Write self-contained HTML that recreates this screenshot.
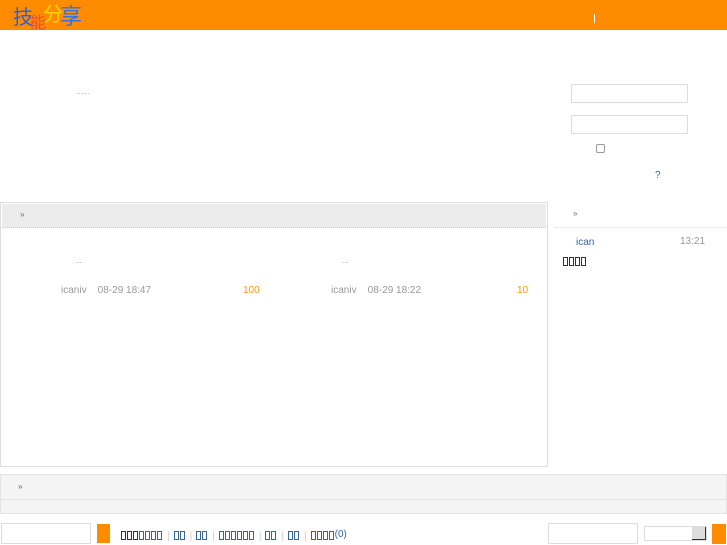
<!DOCTYPE html>
<html><head><meta charset="utf-8"><style>
*{margin:0;padding:0;box-sizing:border-box}
body{width:727px;height:545px;position:relative;background:#fff;font-family:"Liberation Sans","Noto Sans CJK SC",sans-serif;font-size:10px;overflow:hidden}
.a{position:absolute}
.g{color:#999}
.b{color:#369}
.o{color:#f90}
.inp{position:absolute;border:1px solid #ddd;background:#fff}
.tofu{display:inline-block;width:5px;height:9px;border:1px solid #333;margin-right:1px;vertical-align:-1px}
.tb{display:inline-block;width:5px;height:9px;border:1px solid #369;margin-right:1px;vertical-align:-1px}
.sep{color:#ccc;margin:0 4px}
</style></head><body>
<div class="a" style="left:0;top:0;width:727px;height:30px;background:#ff8c00"></div>
<div class="a" style="left:13px;top:1px;font-size:20px;line-height:28px;letter-spacing:-3px;white-space:nowrap"><span style="color:#2a5fd6">技</span><span style="color:#e84d2a;font-size:16px;vertical-align:-4px">能</span><span style="color:#ffd400;vertical-align:3px">分</span><span style="color:#3a6fe0;font-size:22px">享</span></div>
<div class="a" style="left:594px;top:14px;width:1px;height:9px;background:#fff"></div>
<div class="a g" style="left:76px;top:87px;font-size:8px">......</div>
<div class="inp" style="left:571px;top:84px;width:117px;height:19px"></div>
<div class="inp" style="left:571px;top:115px;width:117px;height:19px"></div>
<div class="a" style="left:596px;top:144px;width:9px;height:9px;border:1px solid #999;border-radius:2px"></div>
<div class="a b" style="left:655px;top:170px">?</div>

<div class="a" style="left:0;top:202px;width:548px;height:265px;border:1px solid #ddd"></div>
<div class="a" style="left:2px;top:204px;width:544px;height:24px;background:#ececec;border-bottom:1px dotted #ccc"></div>
<div class="a" style="left:20px;top:210px;color:#666;font-size:8px">»</div>
<div class="a g" style="left:75px;top:256px;font-size:8px">...</div>
<div class="a g" style="left:342px;top:256px;font-size:8px">...</div>
<div class="a g" style="left:61px;top:285px">icaniv&nbsp;&nbsp;&nbsp; 08-29 18:47</div>
<div class="a o" style="left:243px;top:285px">100</div>
<div class="a g" style="left:331px;top:285px">icaniv&nbsp;&nbsp;&nbsp; 08-29 18:22</div>
<div class="a o" style="left:517px;top:285px">10</div>

<div class="a" style="left:573px;top:209px;color:#666;font-size:8px">»</div>
<div class="a" style="left:555px;top:227px;width:170px;border-top:1px dotted #ddd"></div>
<div class="a b" style="left:576px;top:237px">ican</div>
<div class="a g" style="left:680px;top:236px">13:21</div>
<div class="a" style="left:563px;top:257px"><span class="tofu"></span><span class="tofu"></span><span class="tofu"></span><span class="tofu"></span></div>

<div class="a" style="left:0;top:474px;width:727px;height:40px;background:#f4f4f4;border:1px solid #e4e4e4"></div>
<div class="a" style="left:0;top:499px;width:727px;border-top:1px solid #e4e4e4"></div>
<div class="a" style="left:18px;top:482px;color:#666;font-size:8px">»</div>

<div class="inp" style="left:1px;top:523px;width:90px;height:21px"></div>
<div class="a" style="left:97px;top:524px;width:13px;height:19px;background:#ff8c00"></div>
<div class="a" style="left:121px;top:529px;white-space:nowrap"><span class="tofu"></span><span class="tofu"></span><span class="tofu"></span><span class="tb"></span><span class="tb"></span><span class="tb"></span><span class="tb"></span><span class="sep">|</span><span class="tb"></span><span class="tb"></span><span class="sep">|</span><span class="tb"></span><span class="tb"></span><span class="sep">|</span><span class="tb"></span><span class="tb"></span><span class="tb"></span><span class="tb"></span><span class="tb"></span><span class="tb"></span><span class="sep">|</span><span class="tb"></span><span class="tb"></span><span class="sep">|</span><span class="tb"></span><span class="tb"></span><span class="sep">|</span><span class="tb"></span><span class="tb"></span><span class="tb"></span><span class="tb"></span><span class="b" style="vertical-align:2px">(0)</span></div>
<div class="inp" style="left:548px;top:523px;width:90px;height:21px"></div>
<div class="inp" style="left:644px;top:526px;width:63px;height:15px"></div>
<div class="a" style="left:692px;top:527px;width:14px;height:13px;background:#ddd;border-right:1px solid #333;border-bottom:1px solid #333"></div>
<div class="a" style="left:712px;top:524px;width:14px;height:20px;background:#ff8c00"></div>
</body></html>
